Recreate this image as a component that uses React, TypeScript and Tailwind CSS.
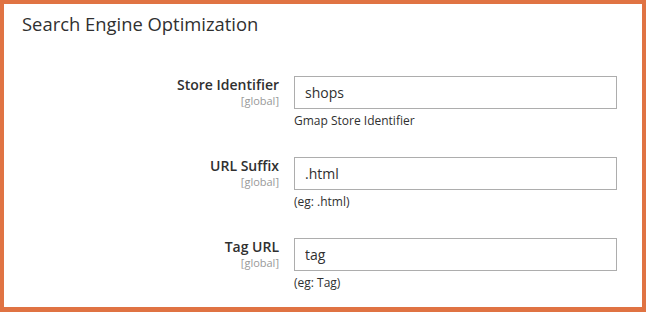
import React from "react";

type Field = {
  label: string;
  scope: string;
  value: string;
  note: React.ReactNode;
};

const fields: Field[] = [
  { label: "Store Identifier", scope: "[global]", value: "shops", note: "Gmap Store Identifier" },
  { label: "URL Suffix", scope: "[global]", value: ".html", note: "(eg: .html)" },
  { label: "Tag URL", scope: "[global]", value: "tag", note: "(eg: Tag)" },
];

const FieldRow: React.FC<{ field: Field }> = ({ field }) => (
  <div className="flex">
    <div className="w-[275px] shrink-0 text-right">
      <div className="text-[14px] leading-[18px] font-semibold text-[#303030]">{field.label}</div>
      <div className="text-[11px] leading-[13px] text-[#999999]">{field.scope}</div>
    </div>
    <div className="ml-[15px] w-[323px]">
      <input
        readOnly
        value={field.value}
        className="h-[33px] w-full border border-[#adadad] bg-white px-[10px] text-[14px] text-[#303030] outline-none"
      />
      <div className="mt-[4px] text-[12px] leading-[16px] text-[#303030]">{field.note}</div>
    </div>
  </div>
);

const App: React.FC = () => {
  return (
    <div
      className="h-[312px] w-[646px] border-4 border-b-[5px] border-[#e07343] bg-white"
      style={{ fontFamily: '"Open Sans", "Liberation Sans", sans-serif' }}
    >
      <h2 className="pl-[18px] pt-[8px] text-[18.4px] leading-[24px] font-medium text-[#303030]">
        Search Engine Optimization
      </h2>
      <div className="mt-[40px] flex flex-col gap-[28px]">
        {fields.map((f) => (
          <FieldRow key={f.label} field={f} />
        ))}
      </div>
    </div>
  );
};

export default App;
